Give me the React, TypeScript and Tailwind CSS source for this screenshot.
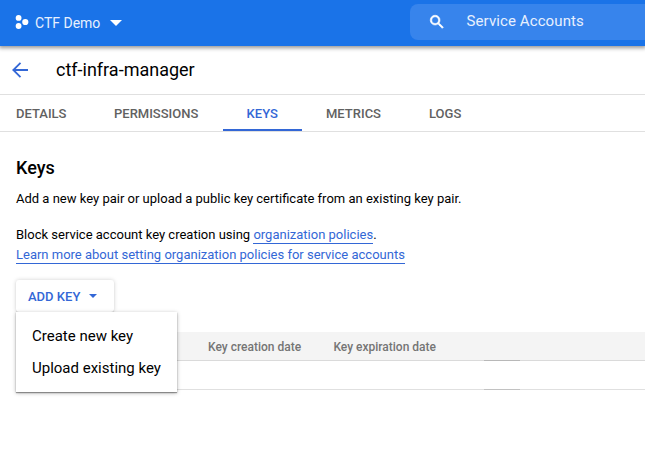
const tabs = [
  { label: "DETAILS", width: "w-[98px]" },
  { label: "PERMISSIONS", width: "w-[133px]" },
  { label: "KEYS", width: "w-[79px]" },
  { label: "METRICS", width: "w-[103px]" },
  { label: "LOGS", width: "w-[80px]" },
];

function TopBar() {
  return (
    <header className="relative z-10 flex h-[46px] items-start bg-[#1a73e8] text-[#e8f0fe] shadow-[0_1px_4px_1px_rgba(0,0,0,0.42)]">
      <button className="flex h-[46px] w-[410px] shrink-0 items-center pl-[15px]">
        <svg className="h-4 w-[14px]" viewBox="0 0 14 16" fill="#fff">
          <circle cx="3.6" cy="2.9" r="2.9" />
          <circle cx="10.3" cy="7" r="3.1" />
          <circle cx="3.6" cy="11" r="2.9" />
        </svg>
        <span className="ml-[6px] text-[14px] leading-5">CTF Demo</span>
        <svg className="ml-[10px] h-[6px] w-3" viewBox="0 0 12 6" fill="#fff">
          <path d="M0 0h12L6 6z" />
        </svg>
      </button>
      <div className="mt-1 flex h-9 flex-1 items-center rounded-l-lg bg-[#3784ec] pl-[18px]">
        <svg className="h-[18px] w-[18px]" viewBox="0 0 24 24" fill="#fff" stroke="#fff" strokeWidth="0.8">
          <path d="M15.5 14h-.79l-.28-.27A6.471 6.471 0 0 0 16 9.5 6.5 6.5 0 1 0 9.5 16c1.61 0 3.09-.59 4.23-1.57l.27.28v.79l5 4.99L20.49 19l-4.99-5zm-6 0C7.01 14 5 11.99 5 9.5S7.01 5 9.5 5 14 7.01 14 9.5 11.99 14 9.5 14z" />
        </svg>
        <span className="ml-[20.5px] pb-[2px] text-[15px] leading-5 tracking-[0.1px]">Service Accounts</span>
      </div>
    </header>
  );
}

export default function App() {
  return (
    <div className="h-[465px] w-[645px] overflow-hidden bg-white font-[Roboto,sans-serif] text-[13px] text-black">
      <TopBar />
      <div className="flex h-[49px] items-center border-b border-[#e0e0e0] pl-[10px]">
        <svg className="h-5 w-5" viewBox="0 0 20 20" fill="none" stroke="#3367d6" strokeWidth="1.8">
          <path d="M18 10H3.5M10.5 2.8 3.3 10l7.2 7.2" />
        </svg>
        <h1 className="ml-[26px] text-[18px] leading-6">ctf-infra-manager</h1>
      </div>
      <nav className="flex h-[37px] border-b border-[#e0e0e0]">
        <div className="-ml-2 flex">
          {tabs.map((tab) => (
            <button
              key={tab.label}
              className={
                tab.width +
                " flex h-9 shrink-0 items-center border-b-2 pt-1 font-medium " +
                (tab.label === "KEYS"
                  ? "border-[#3367d6] pl-[23.6px] text-[#3367d6]"
                  : "border-transparent pl-6 text-[#616161]")
              }
            >
              {tab.label}
            </button>
          ))}
        </div>
      </nav>
      <main>
        <section className="pl-4 leading-5">
          <h2 className="pt-6 text-[18px] font-medium leading-6">Keys</h2>
          <p className="mt-[9px]">Add a new key pair or upload a public key certificate from an existing key pair.</p>
          <p className="mt-4">
            Block service account key creation using{" "}
            <a className="border-b border-[#3367d6] pb-px text-[#3367d6]">organization policies</a>.
            <br />
            <a className="border-b border-[#3367d6] pb-px text-[#3367d6]">
              Learn more about setting organization policies for service accounts
            </a>
          </p>
          <div className="relative mt-[15px] h-[52px] w-[98px]">
            <button className="flex h-8 w-full items-center rounded-[3px] pl-3 pt-[2px] font-medium text-[#3367d6] shadow-[0_0_4px_rgba(0,0,0,0.18),0_1px_1px_rgba(0,0,0,0.15)]">
              ADD KEY
              <svg className="mb-[2px] ml-[9px] h-1 w-2" viewBox="0 0 8 4" fill="#3367d6">
                <path d="M0 0h8L4 4z" />
              </svg>
            </button>
            <ul className="absolute left-0 top-8 h-20 w-[161px] bg-white py-2 text-[15px] leading-8 shadow-[0_1px_1px_rgba(0,0,0,0.35),0_1px_4px_rgba(0,0,0,0.3)]">
              <li className="pl-4">Create new key</li>
              <li className="pl-4">Upload existing key</li>
            </ul>
          </div>
        </section>
        <div className="ml-4">
          <div className="flex h-7 items-center bg-[#f4f4f4] pt-px text-[12px] font-medium text-[#757575]">
            <span className="ml-48 w-[125.4px]">Key creation date</span>
            <span>Key expiration date</span>
          </div>
          <div className="h-px bg-[#dadada] pl-[468px]">
            <div className="h-px w-9 bg-[#b8b8b8]" />
          </div>
          <div className="h-7" />
          <div className="h-px bg-[#e0e0e0] pl-[468px]">
            <div className="h-px w-9 bg-[#c2c2c2]" />
          </div>
        </div>
      </main>
    </div>
  );
}
